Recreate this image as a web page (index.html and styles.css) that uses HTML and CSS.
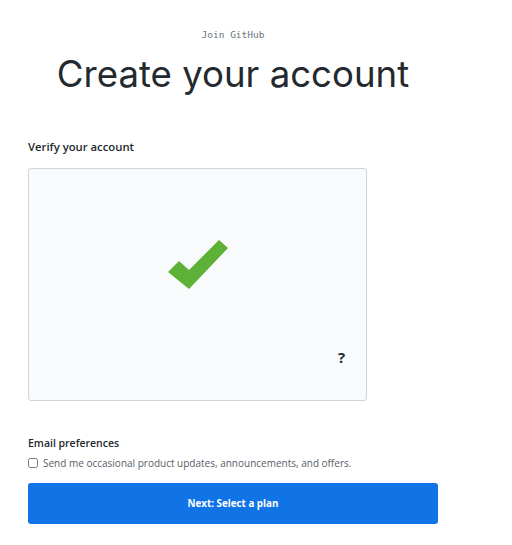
FILE: index.html
```html
<!DOCTYPE html>
<html lang="en">
<head>
    <meta charset="UTF-8">
    <meta name="viewport" content="width=device-width, initial-scale=1.0">
    <title>Join GitHub</title>
    <link rel="stylesheet" href="styles.css">
</head>
<body>
    <main class="signup">
        <header class="signup-header">
            <p class="signup-kicker">Join GitHub</p>
            <h1>Create your account</h1>
        </header>

        <section class="verify">
            <h2>Verify your account</h2>
            <div class="captcha">
                <svg class="captcha-check" width="60" height="50" viewBox="0 0 60 50">
                    <polygon points="0,32 11,21 21,30 51,0 60,8 21,49" fill="#5cb136"/>
                </svg>
                <span class="captcha-help">?</span>
            </div>
        </section>

        <section class="prefs">
            <h2>Email preferences</h2>
            <label class="prefs-option">
                <input type="checkbox">
                Send me occasional product updates, announcements, and offers.
            </label>
        </section>

        <button class="next-button">Next: Select a plan</button>
    </main>
</body>
</html>
```

FILE: styles.css
```css
body {
    margin: 0;
    background-color: #fff;
    font-family: 'Open Sans', 'Noto Sans', Arial, sans-serif;
    color: #24292e;
}
.signup {
    width: 410px;
    margin-left: 28px;
    padding-top: 29px;
}
.signup-header {
    text-align: center;
}
.signup-kicker {
    font-family: 'DejaVu Sans Mono', monospace;
    font-size: 9.5px;
    color: #6a737d;
    margin: 0;
}
.signup-header h1 {
    font-family: Inter, 'Open Sans', sans-serif;
    font-weight: 400;
    font-size: 36.6px;
    margin: 10px 0 0;
    line-height: 48px;
}
.verify {
    margin-top: 41px;
}
.verify h2,
.prefs h2 {
    font-size: 11.3px;
    font-weight: 600;
    margin: 0 0 14px;
}
.captcha {
    position: relative;
    width: 337px;
    height: 231px;
    border: 1px solid #d1d5da;
    border-radius: 3px;
    background-color: #f9fafb;
}
.captcha-check {
    position: absolute;
    left: 139px;
    top: 71px;
}
.captcha-help {
    position: absolute;
    left: 309px;
    top: 178px;
    font-size: 15px;
    font-weight: 700;
}
.prefs {
    margin-top: 35px;
}
.prefs h2 {
    font-size: 10.5px;
    margin-bottom: 6px;
}
.prefs-option {
    display: flex;
    align-items: center;
    gap: 5px;
    font-size: 10px;
    color: #586069;
}
.prefs-option input {
    width: 10px;
    height: 10px;
    margin: 0;
}
.next-button {
    display: block;
    width: 410px;
    height: 41px;
    margin-top: 13px;
    border: none;
    border-radius: 3px;
    background-color: #1074e7;
    color: #fff;
    font-family: 'Open Sans', 'Noto Sans', Arial, sans-serif;
    font-size: 9.8px;
    font-weight: 700;
    cursor: pointer;
}
```
